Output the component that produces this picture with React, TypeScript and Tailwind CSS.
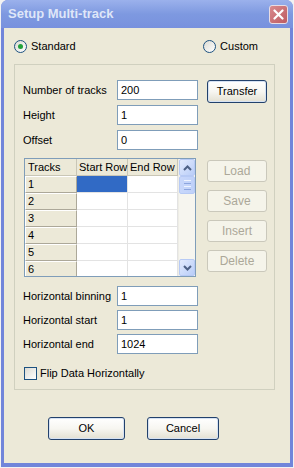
import type { ReactNode } from "react";

const font = "font-['Liberation_Sans',Arial,sans-serif]";

const rows = [1, 2, 3, 4, 5, 6];

function XpButton({ children, width, disabled }: { children: ReactNode; width: string; disabled?: boolean }) {
  if (disabled) {
    return (
      <div className={`${width} flex h-[22px] items-center justify-center rounded-[3px] border border-[#cac8bb] bg-[#f5f4ea] text-[#aca899]`}>
        {children}
      </div>
    );
  }
  return (
    <div className={`${width} flex h-[23px] items-center justify-center rounded-[3px] border border-[#22416c] bg-gradient-to-b from-white via-[#f7f6f1] to-[#e3e0d2] text-black shadow-[inset_0_0_0_1px_#d6e2f3]`}>
      {children}
    </div>
  );
}

function Field({ label, value }: { label: string; value: string }) {
  return (
    <div className="flex h-[20px] items-center">
      <div className="w-[102px] shrink-0 whitespace-nowrap pl-[8px]">{label}</div>
      <div className="flex h-[20px] w-[81px] items-center border border-[#7f9db9] bg-white pl-[3px]">{value}</div>
    </div>
  );
}

function Radio({ checked, label }: { checked?: boolean; label: string }) {
  return (
    <div className="flex items-center gap-[4px]">
      <div className="flex h-[13px] w-[13px] items-center justify-center rounded-full border border-[#1c5180] bg-gradient-to-br from-[#dcdbd3] to-white">
        {checked ? <div className="h-[5px] w-[5px] rounded-full bg-[#22a13a]" /> : null}
      </div>
      <span>{label}</span>
    </div>
  );
}

function ScrollButton({ up }: { up?: boolean }) {
  return (
    <div className="flex h-[17px] w-[16px] items-center justify-center rounded-[2px] border border-[#b7caf5] bg-gradient-to-br from-[#e3ebfd] to-[#b9cdf8]">
      <svg width="9" height="6" viewBox="0 0 9 6">
        <path d={up ? "M1 5 L4.5 1.5 L8 5" : "M1 1 L4.5 4.5 L8 1"} fill="none" stroke="#4d6185" strokeWidth="2" />
      </svg>
    </div>
  );
}

function TrackTable() {
  return (
    <div className="flex h-[119px] w-[172px] overflow-hidden border border-[#7f9db9] bg-white">
      <div className="flex w-[153px] flex-col">
        <div className="flex h-[17px] shrink-0 bg-[#ece9d8] leading-[17px]">
          <div className="w-[52px] border-r border-b border-[#c9c6b6] pl-[3px]">Tracks</div>
          <div className="w-[51px] border-r border-b border-[#c9c6b6] pl-[2px] whitespace-nowrap">Start Row</div>
          <div className="w-[50px] border-r border-b border-[#c9c6b6] pl-[2px] whitespace-nowrap">End Row</div>
        </div>
        {rows.map((r) => (
          <div key={r} className="flex h-[17px] shrink-0">
            <div className="w-[52px] border-t border-l border-white border-r-[#aca899] border-b-[#aca899] border-r border-b bg-[#ece9d8] pl-[2px] leading-[15px]">
              {r}
            </div>
            <div className={`w-[51px] border-r border-b border-[#e3e3e3] ${r === 1 ? "bg-[#316ac5]" : "bg-white"}`} />
            <div className="w-[50px] border-r border-b border-[#e3e3e3] bg-white" />
          </div>
        ))}
      </div>
      <div className="flex w-[17px] flex-col border-l border-[#eeede5] bg-[#f6f5ef]">
        <ScrollButton up />
        <div className="flex h-[18px] w-[16px] flex-col items-center justify-center gap-[2px] rounded-[2px] border border-[#b7caf5] bg-gradient-to-r from-[#c8d7fb] to-[#bfd1f9]">
          <div className="h-px w-[7px] bg-[#eef3fe]" />
          <div className="h-px w-[7px] bg-[#8ca5de]" />
          <div className="h-px w-[7px] bg-[#eef3fe]" />
          <div className="h-px w-[7px] bg-[#8ca5de]" />
        </div>
        <div className="flex-1" />
        <ScrollButton />
      </div>
    </div>
  );
}

export default function App() {
  return (
    <div className={`h-[468px] w-[294px] bg-[#f2f2f2] ${font} text-[11px] text-black`}>
      <div className="ml-[1px] flex h-[467px] w-[292px] flex-col rounded-t-[7px] bg-[#7185da]">
        <div className="flex h-[28px] shrink-0 items-center justify-between rounded-t-[7px] bg-gradient-to-b from-[#9bb1ec] via-[#7e99e0] to-[#7891de] pl-[7px] pr-[5px]">
          <span className="text-[13px] font-bold text-[#dfe6f8]">Setup Multi-track</span>
          <div className="flex h-[19px] w-[19px] items-center justify-center rounded-[3px] border border-[#e8dde4] bg-gradient-to-br from-[#d98a8e] to-[#bd5b62]">
            <svg width="11" height="11" viewBox="0 0 11 11">
              <path d="M1.5 1.5 L9.5 9.5 M9.5 1.5 L1.5 9.5" stroke="#fff" strokeWidth="2.2" strokeLinecap="round" />
            </svg>
          </div>
        </div>
        <div className="mx-[3px] mb-[4px] flex flex-1 flex-col bg-[#ece9d8] px-[10px]">
          <div className="mt-[12px] flex h-[13px] items-center justify-between pr-[22px]">
            <Radio checked label="Standard" />
            <Radio label="Custom" />
          </div>
          <div className="mt-[11px] flex h-[326px] w-[261px] flex-col border border-[#d0d0bf]">
            <div className="mt-[15px] flex">
              <div className="flex flex-col gap-[5px]">
                <Field label="Number of tracks" value="200" />
                <Field label="Height" value="1" />
                <Field label="Offset" value="0" />
              </div>
              <div className="ml-[9px]">
                <XpButton width="w-[60px]">Transfer</XpButton>
              </div>
            </div>
            <div className="mt-[8px] flex pl-[9px]">
              <TrackTable />
              <div className="ml-[11px] mt-[2px] flex flex-col gap-[8px] text-[12px]">
                <XpButton width="w-[60px]" disabled>Load</XpButton>
                <XpButton width="w-[60px]" disabled>Save</XpButton>
                <XpButton width="w-[60px]" disabled>Insert</XpButton>
                <XpButton width="w-[60px]" disabled>Delete</XpButton>
              </div>
            </div>
            <div className="mt-[9px] flex flex-col gap-[4px]">
              <Field label="Horizontal binning" value="1" />
              <Field label="Horizontal start" value="1" />
              <Field label="Horizontal end" value="1024" />
            </div>
            <div className="mt-[11px] flex items-center gap-[3px] pl-[9px]">
              <div className="h-[13px] w-[13px] border border-[#1c5180] bg-gradient-to-br from-[#dcdbd3] to-white" />
              <span>Flip Data Horizontally</span>
            </div>
          </div>
          <div className="mt-[27px] flex">
            <div className="ml-[34px]">
              <XpButton width="w-[77px]">OK</XpButton>
            </div>
            <div className="ml-[22px]">
              <XpButton width="w-[72px]">Cancel</XpButton>
            </div>
          </div>
        </div>
      </div>
    </div>
  );
}
